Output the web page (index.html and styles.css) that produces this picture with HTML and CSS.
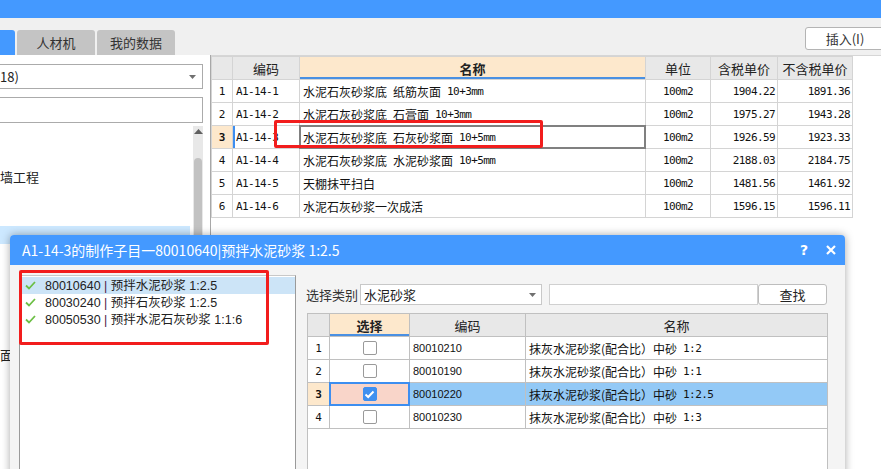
FILE: index.html
```html
<!DOCTYPE html>
<html lang="zh">
<head>
<meta charset="utf-8">
<title>定额</title>
<link rel="stylesheet" href="styles.css">
</head>
<body>
<div class="app">
  <div class="topbar"></div>
  <div class="toolbar">
    <div class="tabs">
      <div class="tab tab-active"></div>
      <div class="tab">人材机</div>
      <div class="tab">我的数据</div>
    </div>
    <button class="insert-btn">插入(I)</button>
  </div>
  <div class="main">
    <div class="leftpanel">
      <div class="combo"><span>18)</span><svg class="caret" width="7" height="4" viewBox="0 0 7 4"><path d="M0 0H7L3.5 4Z" fill="#707070"/></svg></div>
      <div class="searchbox"></div>
      <div class="tree">
        <div class="tree-list">
          <div class="tree-item t1">墙工程</div>
          <div class="tree-item t-sel"></div>
          <div class="tree-item t2">面</div>
        </div>
        <div class="vscroll">
          <svg width="9" height="5" viewBox="0 0 9 5"><path d="M0 5L4.5 0L9 5Z" fill="#606060"/></svg>
          <div class="thumb"></div>
        </div>
      </div>
    </div>
    <div class="rightpane">
      <div class="mgrid">
        <div class="c h"></div><div class="c h">编码</div><div class="c h hsel">名称</div><div class="c h">单位</div><div class="c h">含税单价</div><div class="c h">不含税单价</div>

        <div class="c rn">1</div><div class="c mono">A1-14-1</div><div class="c nm">水泥石灰砂浆底<span class="lat"> </span>纸筋灰面<span class="lat"> 10+3mm</span></div><div class="c mono ctr">100m2</div><div class="c mono rt">1904.22</div><div class="c mono rt">1891.36</div>

        <div class="c rn">2</div><div class="c mono">A1-14-2</div><div class="c nm">水泥石灰砂浆底<span class="lat"> </span>石膏面<span class="lat"> 10+3mm</span></div><div class="c mono ctr">100m2</div><div class="c mono rt">1975.27</div><div class="c mono rt">1943.28</div>

        <div class="c rn rn-sel">3</div><div class="c mono code-sel">A1-14-3</div><div class="c nm cur">水泥石灰砂浆底<span class="lat"> </span>石灰砂浆面<span class="lat"> 10+5mm</span></div><div class="c mono ctr">100m2</div><div class="c mono rt">1926.59</div><div class="c mono rt">1923.33</div>

        <div class="c rn">4</div><div class="c mono">A1-14-4</div><div class="c nm">水泥石灰砂浆底<span class="lat"> </span>水泥砂浆面<span class="lat"> 10+5mm</span></div><div class="c mono ctr">100m2</div><div class="c mono rt">2188.03</div><div class="c mono rt">2184.75</div>

        <div class="c rn">5</div><div class="c mono">A1-14-5</div><div class="c nm">天棚抹平扫白</div><div class="c mono ctr">100m2</div><div class="c mono rt">1481.56</div><div class="c mono rt">1461.92</div>

        <div class="c rn">6</div><div class="c mono">A1-14-6</div><div class="c nm">水泥石灰砂浆一次成活</div><div class="c mono ctr">100m2</div><div class="c mono rt">1596.15</div><div class="c mono rt">1596.11</div>
      </div>
    </div>
  </div>
</div>

<div class="annot annot-main"></div>

<div class="dialog">
  <div class="dtitle">
    <span class="dtitle-text">A1-14-3的制作子目一80010640|预拌水泥砂浆 1:2.5</span>
    <div class="dtitle-icons">
      <span class="qmark">?</span>
      <svg width="10" height="10" viewBox="0 0 10 10"><path d="M1 1L9 9M9 1L1 9" stroke="#fff" stroke-width="2.2"/></svg>
    </div>
  </div>
  <div class="dbody">
    <div class="dlist">
      <div class="ditem on"><svg class="ck" width="11" height="9" viewBox="0 0 11 9"><path d="M1 4.5L4 7.5L10 1" fill="none" stroke="#6cbf45" stroke-width="1.8"/></svg><span class="dtext">80010640 <span class="bar">|</span> 预拌水泥砂浆 1:2.5</span></div>
      <div class="ditem"><svg class="ck" width="11" height="9" viewBox="0 0 11 9"><path d="M1 4.5L4 7.5L10 1" fill="none" stroke="#6cbf45" stroke-width="1.8"/></svg><span class="dtext">80030240 <span class="bar">|</span> 预拌石灰砂浆 1:2.5</span></div>
      <div class="ditem"><svg class="ck" width="11" height="9" viewBox="0 0 11 9"><path d="M1 4.5L4 7.5L10 1" fill="none" stroke="#6cbf45" stroke-width="1.8"/></svg><span class="dtext">80050530 <span class="bar">|</span> 预拌水泥石灰砂浆 1:1:6</span></div>
    </div>
    <div class="dright">
      <div class="srow">
        <span class="slabel">选择类别</span>
        <div class="dcombo"><span>水泥砂浆</span><svg class="caret" width="7" height="4" viewBox="0 0 7 4"><path d="M0 0H7L3.5 4Z" fill="#707070"/></svg></div>
        <div class="sinput"></div>
        <button class="sbtn">查找</button>
      </div>
      <div class="dgrid-wrap">
        <div class="dgrid">
          <div class="c h"></div><div class="c h hsel">选择</div><div class="c h">编码</div><div class="c h">名称</div>

          <div class="c rn">1</div><div class="c ctr"><span class="cb"></span></div><div class="c dcode">80010210</div><div class="c nm">抹灰水泥砂浆(配合比）中砂<span class="lat"> 1:2</span></div>

          <div class="c rn">2</div><div class="c ctr"><span class="cb"></span></div><div class="c dcode">80010190</div><div class="c nm">抹灰水泥砂浆(配合比）中砂<span class="lat"> 1:1</span></div>

          <div class="c rn rn-sel">3</div><div class="c ctr pick"><span class="cb cb-on"><svg width="11" height="9" viewBox="0 0 11 9"><path d="M1.5 4.5L4.2 7L9.5 1.5" fill="none" stroke="#fff" stroke-width="2"/></svg></span></div><div class="c dcode row-hl">80010220</div><div class="c nm row-hl">抹灰水泥砂浆(配合比）中砂<span class="lat"> 1:2.5</span></div>

          <div class="c rn">4</div><div class="c ctr"><span class="cb"></span></div><div class="c dcode">80010230</div><div class="c nm">抹灰水泥砂浆(配合比）中砂<span class="lat"> 1:3</span></div>
        </div>
      </div>
    </div>
  </div>
</div>

<div class="annot annot-dlg"></div>
</body>
</html>
```

FILE: styles.css
```css
* { box-sizing: border-box; }
html, body { margin: 0; padding: 0; }
body {
  width: 881px;
  height: 469px;
  overflow: hidden;
  position: relative;
  background: #f0f0f0;
  font-family: "Noto Sans CJK SC", "Noto Sans", sans-serif;
  color: #222;
}
.app { display: flex; flex-direction: column; height: 469px; }
.topbar { height: 18px; flex: none; background: #4499ff; }
.toolbar { height: 37px; flex: none; display: flex; justify-content: space-between; background: #f0f0f0; }
.tabs { display: flex; gap: 2px; align-self: flex-end; }
.tab {
  height: 25px; width: 78px; background: #c4c4c4; border-radius: 3px 3px 0 0;
  font-size: 13px; color: #333; display: flex; align-items: center; justify-content: center;
}
.tab-active { width: 15px; background: #4499ff; border-radius: 0 3px 0 0; }
.insert-btn {
  margin-top: 9px; margin-right: -4px; width: 80px; height: 23px; padding: 0;
  background: #fff; border: 1px solid #b4b4b4; border-radius: 3px;
  font: 13px "Noto Sans CJK SC", sans-serif; color: #333;
}
.main { flex: 1; display: flex; min-height: 0; }
.leftpanel {
  width: 211px; flex: none; background: #fff; border-right: 1px solid #a8a8a8;
  padding: 9px 7px 0 0; display: flex; flex-direction: column;
}
.combo {
  height: 25px; border: 1px solid #ababab; border-left: none; display: flex;
  align-items: center; justify-content: space-between; padding: 0 6px 0 0; font-size: 13px;
}
.searchbox { height: 26px; margin-top: 8px; border: 1px solid #ababab; border-left: none; }
.tree { flex: 1; display: flex; margin-top: 3px; min-height: 0; }
.tree-list { flex: 1; }
.tree-item { height: 18px; font-size: 13px; line-height: 18px; }
.t1 { margin-top: 42px; }
.t-sel { margin-top: 40px; width: 190px; background: #cce8ff; }
.t2 { margin-top: 102px; }
.vscroll { width: 10px; background: #e8e8e8; display: flex; flex-direction: column; align-items: center; padding-top: 3px; }
.thumb { margin-top: 24px; width: 8px; flex: 1; border-radius: 4px; background: #c2c2c2; }
.rightpane { flex: 1; background: #fff; border-top: 1px solid #d6d6d6; }

.mgrid {
  display: grid; grid-template-columns: 20px 66px 345px 64px 66px 74px; grid-auto-rows: 22px;
  gap: 1px; background: #d4d4d4; border: 1px solid #d4d4d4; width: max-content;
}
.c {
  background: #fff; display: flex; align-items: center; padding: 0 3px;
  font-size: 12px; white-space: pre; overflow: hidden; color: #111;
}
.h { background: #e8e8e8; justify-content: center; font-size: 13px; color: #222; }
.hsel { background: #fde8cc; font-weight: bold; box-shadow: inset 0 -2px 0 #4a90e2; }
.rn { justify-content: center; padding: 0; font-family: "DejaVu Sans Mono", monospace; font-size: 11px; }
.rn-sel { background: #fde8cc; font-weight: bold; }
.mono { font-family: "DejaVu Sans Mono", monospace; font-size: 11px; letter-spacing: -0.6px; }
.lat { font-family: "DejaVu Sans Mono", monospace; font-size: 11px; letter-spacing: -0.6px; }
.ctr { justify-content: center; }
.rt { justify-content: flex-end; padding-right: 2px; }
.nm { font-size: 12px; }
.code-sel { box-shadow: inset 2px 0 0 #3d8ef0; }
.cur { position: relative; z-index: 1; outline: 2px solid #808080; outline-offset: -1px; }

.annot { position: absolute; border: 3px solid #f21d1d; border-radius: 2px; z-index: 5; }
.annot-main { left: 274px; top: 120px; width: 269px; height: 28px; }
.annot-dlg { left: 19px; top: 270px; width: 250px; height: 75px; }

.dialog {
  position: absolute; left: 10px; top: 235px; width: 835px; height: 250px;
  background: #f4f4f4; border-radius: 4px 4px 0 0; box-shadow: 0 0 9px rgba(0,0,0,0.35);
  display: flex; flex-direction: column; z-index: 3;
}
.dtitle {
  height: 30px; flex: none; background: #4499ff; border-radius: 4px 4px 0 0;
  display: flex; align-items: center; justify-content: space-between; padding: 0 9px 0 12px; color: #fff;
}
.dtitle-text { font-size: 14px; }
.dtitle-icons { display: flex; align-items: center; gap: 18px; }
.qmark { font: bold 14px "DejaVu Sans", sans-serif; }
.dbody { flex: 1; display: flex; padding: 10px 0 0 9px; min-height: 0; }
.dlist {
  width: 277px; flex: none; background: #fff; border: 1px solid #9a9a9a; border-top-color: #c8c8c8;
  padding-top: 1px;
}
.ditem {
  height: 17px; display: flex; align-items: center; gap: 9px; padding-left: 5px;
  white-space: nowrap; overflow: hidden;
}
.dtext {
  font-family: "Liberation Sans", "Noto Sans CJK SC", sans-serif; font-size: 12.5px;
  line-height: 14px; color: #222;
}
.ditem.on { background: #cce4f7; }
.bar { color: #4a1a4a; }
.dright { margin-left: 10px; padding-top: 9px; width: 522px; display: flex; flex-direction: column; }
.srow { height: 21px; display: flex; align-items: stretch; }
.slabel { width: 54px; font-size: 13px; color: #333; display: flex; align-items: center; }
.dcombo {
  width: 182px; background: #fff; border: 1px solid #c8c8c8; display: flex; align-items: center;
  justify-content: space-between; padding: 0 5px 0 3px; font-size: 13px;
}
.sinput { width: 209px; margin-left: 7px; background: #fff; border: 1px solid #d0d0d0; }
.sbtn {
  width: 69px; padding: 0; background: #fff; border: 1px solid #bdbdbd; border-radius: 3px;
  font: 13px "Noto Sans CJK SC", sans-serif; color: #222;
}
.dgrid-wrap { margin-top: 8px; margin-left: 1px; flex: 1; background: #fff; border: 1px solid #c0c0c0; border-bottom: none; }
.dgrid {
  display: grid; grid-template-columns: 21px 79px 115px 301px; grid-auto-rows: 22px; gap: 1px;
  background: #c0c0c0; border-bottom: 1px solid #c0c0c0;
}
.dcode { font-family: "Liberation Sans", sans-serif; font-size: 11px; }
.cb { width: 14px; height: 14px; border: 1px solid #9a9a9a; border-radius: 2px; background: #fff; display: flex; align-items: center; justify-content: center; }
.cb-on { background: #3f90f0; border-color: #3f90f0; }
.pick { background: #f9d5c9; position: relative; z-index: 1; outline: 2px solid #3d8ef0; outline-offset: -1px; }
.row-hl { background: #93c9f6; }
```
